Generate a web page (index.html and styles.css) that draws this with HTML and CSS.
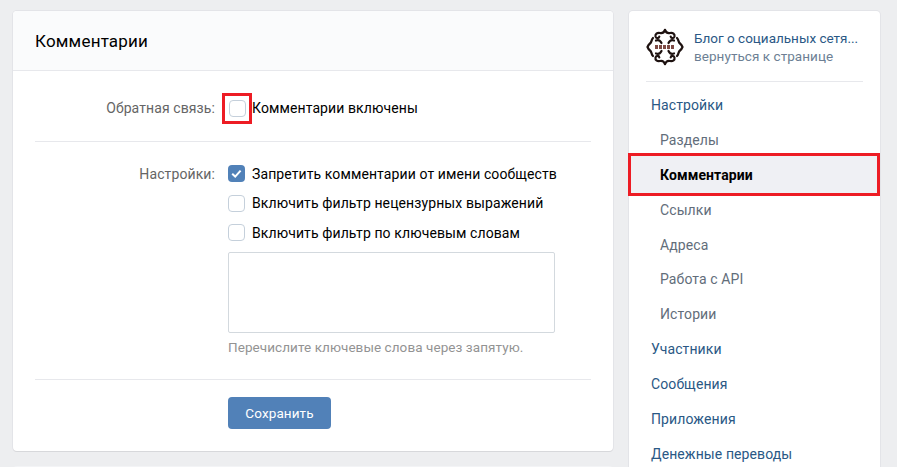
FILE: index.html
```html
<!DOCTYPE html>
<html lang="ru">
<head>
<meta charset="utf-8">
<title>Комментарии</title>
<link rel="stylesheet" href="styles.css">
</head>
<body>
<div class="page">
  <div class="column">
  <main class="card">
    <h1 class="card-title">Комментарии</h1>
    <div class="card-body">
      <div class="row row-feedback">
        <div class="label">Обратная связь:</div>
        <div class="field check-row">
          <span class="mark-frame"><span class="box"></span></span>
          <span class="check-text">Комментарии включены</span>
        </div>
      </div>
      <hr class="divider divider-a">
      <div class="row">
        <div class="label">Настройки:</div>
        <div class="field stack">
          <div class="check-row">
            <span class="box box-on"><svg viewBox="0 0 17 17" width="17" height="17"><path d="M4.2 8.8 7.2 11.6 12.6 5.6" fill="none" stroke="#fff" stroke-width="2"/></svg></span>
            <span class="check-text">Запретить комментарии от имени сообществ</span>
          </div>
          <div class="check-row">
            <span class="box"></span>
            <span class="check-text">Включить фильтр нецензурных выражений</span>
          </div>
          <div class="check-row">
            <span class="box"></span>
            <span class="check-text">Включить фильтр по ключевым словам</span>
          </div>
          <div class="textarea"></div>
          <div class="hint">Перечислите ключевые слова через запятую.</div>
        </div>
      </div>
      <hr class="divider divider-b">
      <div class="row">
        <div class="label"></div>
        <div class="field"><button class="btn" type="button">Сохранить</button></div>
      </div>
    </div>
  </main>
  <div class="next-card"></div>
  </div>
  <aside class="side">
    <div class="owner">
      <svg class="logo" viewBox="0 0 38 38" width="38" height="38">
        <g fill="none" stroke="#1e1210" stroke-width="2.2" stroke-linecap="round">
          <path d="M19 2c-1 2.500-3 3.500-5 3-3-.5-5 1-4.500 3.500.5 2.200 3.500 2.200 3.800.2"/>
          <path d="M19 2c1 2.500 3 3.500 5 3 3-.5 5 1 4.500 3.500-.5 2.200-3.500 2.200-3.800.2"/>
          <path d="M19 36c-1-2.500-3-3.500-5-3-3 .5-5-1-4.500-3.500.5-2.200 3.500-2.200 3.800-.2"/>
          <path d="M19 36c1-2.500 3-3.500 5-3 3 .5 5-1 4.500-3.500-.5-2.200-3.500-2.200-3.800-.2"/>
          <path d="M7 10C5 12 6 14 4 15.500c-1.200.9-2 2.200-2.500 3.500.5 1.300 1.300 2.600 2.500 3.500 2 1.500 1 3.500 3 5.500"/>
          <path d="M31 10c2 2 1 4 3 5.500 1.200.9 2 2.200 2.500 3.500-.5 1.300-1.300 2.600-2.500 3.500-2 1.500-1 3.500-3 5.500"/>
          <path d="M10 12.500c2.500-1 4.500.5 5.500 2.500M28 12.500c-2.500-1-4.500.5-5.500 2.500M10 25.500c2.500 1 4.500-.5 5.500-2.500M28 25.500c-2.500 1-4.500-.5-5.500-2.500"/>
        </g>
        <path d="M9 19h20" stroke="#7d4a44" stroke-width="4" stroke-dasharray="3 1"/>
      </svg>
      <div class="owner-text">
        <div class="owner-name">Блог о социальных сетя...</div>
        <div class="owner-back">вернуться к странице</div>
      </div>
    </div>
    <nav class="menu">
      <div class="item">Настройки</div>
      <div class="item sub">Разделы</div>
      <div class="item sub active">Комментарии</div>
      <div class="item sub">Ссылки</div>
      <div class="item sub">Адреса</div>
      <div class="item sub">Работа с API</div>
      <div class="item sub">Истории</div>
      <div class="item">Участники</div>
      <div class="item">Сообщения</div>
      <div class="item">Приложения</div>
      <div class="item">Денежные переводы</div>
    </nav>
  </aside>
</div>
</body>
</html>
```
FILE: styles.css
```css
* { box-sizing: border-box; }
html, body { margin: 0; height: 100%; overflow: hidden; }
body { background: #edeef0; font-family: Roboto, "Noto Sans", sans-serif; font-size: 14px; color: #000; }
.page { display: flex; align-items: flex-start; gap: 16px; padding: 11px 17px 0 13px; height: 467px; overflow: hidden; }
.column { width: 600px; flex: none; display: flex; flex-direction: column; gap: 15px; }
.card { height: 440px; flex: none; background: #fff; border-radius: 4px; box-shadow: 0 1px 0 0 #d7d8db, 0 0 0 1px #e3e4e8; }
.next-card { height: 40px; flex: none; background: #f3f4f6; border-radius: 4px; }
.card-title { margin: 0; height: 60px; padding: 0 22px; display: flex; align-items: center; font-weight: 400; font-size: 17px; letter-spacing: .2px; background: #fafbfc; border-bottom: 1px solid #e7e8ec; border-radius: 4px 4px 0 0; }
.card-body { padding: 0 22px; }
.row { display: flex; }
.row-feedback { margin-top: 22px; }
.label { width: 180px; flex: none; text-align: right; color: #656565; line-height: 30px; white-space: nowrap; margin-right: 13px; letter-spacing: .1px; }
.field { flex: 1; min-width: 0; }
.stack { display: flex; flex-direction: column; }
.check-row { display: flex; align-items: center; height: 29.5px; white-space: nowrap; letter-spacing: .1px; }
.row-feedback .check-row { height: 30px; }
.box { width: 17px; height: 17px; border: 1px solid #c5d0db; border-radius: 4px; background: #fff; flex: none; display: block; }
.box-on { background: #5181b8; border: 0; }
.box-on svg { display: block; }
.check-text { margin-left: 7px; }
.mark-frame { width: 30px; height: 31px; border: 3px solid #ed1c24; margin-left: -6px; margin-right: -7px; padding: 4px; flex: none; display: block; }
.divider { border: 0; height: 1px; background: #e7e8ec; margin: 0; }
.divider-a { margin-top: 18px; margin-bottom: 17px; }
.divider-b { margin-top: 24px; margin-bottom: 17px; }
.textarea { width: 327px; height: 81px; border: 1px solid #d3d9de; border-radius: 2px; margin-top: 4.5px; background: #fff; }
.hint { color: #939393; margin-top: 6px; line-height: 16px; font-size: 13.5px; letter-spacing: .07px; }
.btn { width: 103px; height: 32px; background: #5181b8; color: #fff; border: 0; border-radius: 4px; font: inherit; font-size: 13.5px; letter-spacing: .1px; padding: 0; }
.side { width: 251px; flex: none; height: 520px; background: #fff; border-radius: 4px; box-shadow: 0 0 0 1px #e3e4e8; }
.owner { display: flex; align-items: center; margin: 0 17px; height: 71px; border-bottom: 1px solid #e7e8ec; padding-top: 2px; }
.logo { flex: none; margin-right: 10px; display: block; }
.owner-name { color: #2a5885; font-size: 13.5px; line-height: 18px; white-space: nowrap; }
.owner-back { font-size: 13.5px; line-height: 18px; color: #6d7f94; white-space: nowrap; letter-spacing: .05px; }
.menu { padding-top: 6px; }
.item { height: 34.9px; line-height: 34.9px; padding-left: 22px; color: #2a5885; font-size: 14px; letter-spacing: .1px; }
.sub { padding-left: 31px; color: #626d7a; }
.active { height: 43px; line-height: 38px; margin: -5px 0 -3.1px -1px; border: 3px solid #ed1c24; padding-left: 29px; background: #eff0f4; color: #000; font-weight: 700; position: relative; }
```
